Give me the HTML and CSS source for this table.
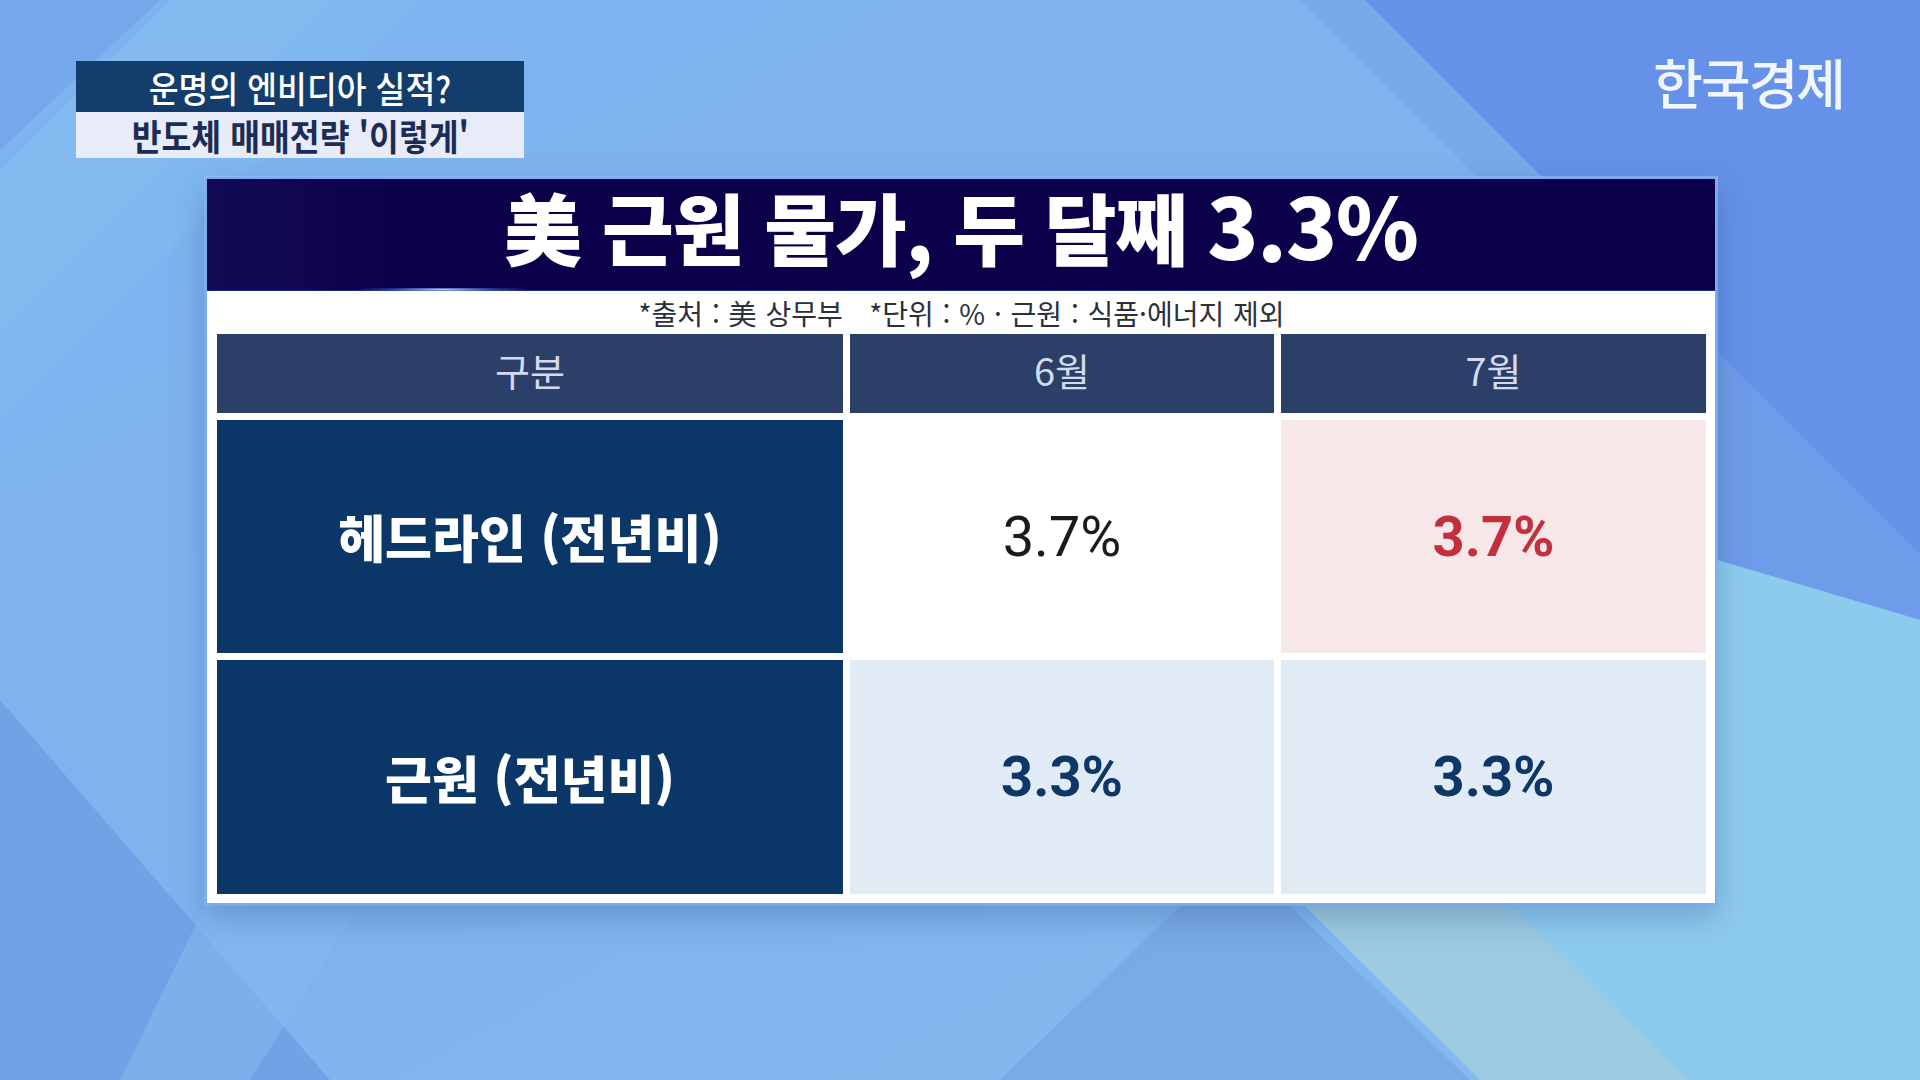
FILE: index.html
```html
<!DOCTYPE html>
<html lang="ko">
<head>
<meta charset="utf-8">
<title>美 근원 물가, 두 달째 3.3%</title>
<link rel="stylesheet" href="styles.css">
</head>
<body>
<div class="stage">
  <svg class="bg" width="1920" height="1080" viewBox="0 0 1920 1080" aria-hidden="true">
    <defs>
      <linearGradient id="g0" x1="0" y1="0" x2="1" y2="1">
        <stop offset="0" stop-color="#7db3ee"/>
        <stop offset="0.5" stop-color="#7fb3ee"/>
        <stop offset="1" stop-color="#86bcee"/>
      </linearGradient>
    </defs>
    <rect x="0" y="0" width="1920" height="1080" fill="url(#g0)"/>
    <polygon points="0,0 160,0 0,150" fill="#74a8ea"/>
    <polygon points="0,170 170,0 330,0 0,330" fill="#86c0f2" opacity="0.55"/>
    <polygon points="0,330 330,0 420,0 0,420" fill="#84c2f4" opacity="0.35"/>
    <polygon points="640,0 1365,0 1720,355 1720,420 1300,0" fill="#72a3ea" opacity="0.6"/>
    <polygon points="1365,0 1920,0 1920,555" fill="#6591e8"/>
    <polygon points="1717,352 1920,555 1920,620 1717,560" fill="#6f9ce9"/>
    <polygon points="1717,560 1920,620 1920,1080 1690,1080 1510,906 1717,906" fill="#8dcbee"/>
    <polygon points="0,700 0,1080 330,1080" fill="#6e9fe4" opacity="0.85"/>
    <polygon points="205,906 360,906 250,1080 120,1080" fill="#86b8ee" opacity="0.6"/>
    <polygon points="1180,906 1000,1080 1470,1080 1290,906" fill="#73a1df" opacity="0.6"/>
    <polygon points="1305,906 1510,906 1690,1080 1480,1080" fill="#9bcbe1"/>
  </svg>

  <header class="top">
    <div class="caption">
      <div class="cap-line cap-dark"><span class="squeeze">운명의 엔비디아 실적?</span></div>
      <div class="cap-line cap-light"><span class="squeeze">반도체 매매전략 '이렇게'</span></div>
    </div>
    <div class="logo">한국경제</div>
  </header>

  <main class="card">
    <div class="title-bar">
      <h1 class="title">美 근원 물가, 두 달째 <span class="title-num">3.3%</span></h1>
    </div>
    <div class="card-body">
      <p class="source">*출처 : 美 상무부&nbsp;&nbsp; *단위 : % · 근원 : 식품·에너지 제외</p>
      <div class="table">
        <div class="cell head">구분</div>
        <div class="cell head">6월</div>
        <div class="cell head">7월</div>

        <div class="cell label">헤드라인 (전년비)</div>
        <div class="cell value plain">3.7%</div>
        <div class="cell value red">3.7%</div>

        <div class="cell label">근원 (전년비)</div>
        <div class="cell value navy">3.3%</div>
        <div class="cell value navy">3.3%</div>
      </div>
    </div>
  </main>
</div>
</body>
</html>
```
FILE: styles.css
```css
html, body {
  margin: 0;
  padding: 0;
}
body {
  width: 1920px;
  height: 1080px;
  overflow: hidden;
  font-family: "Noto Sans CJK KR", "Noto Sans", sans-serif;
}
.stage {
  position: relative;
  width: 1920px;
  height: 1080px;
  overflow: hidden;
}
.bg {
  position: absolute;
  left: 0;
  top: 0;
  z-index: 0;
}
.top {
  position: relative;
  z-index: 1;
  display: flex;
  justify-content: space-between;
  align-items: flex-start;
  padding: 61px 76px 0 76px;
}
.caption {
  width: 448px;
  display: flex;
  flex-direction: column;
}
.cap-line {
  display: flex;
  justify-content: center;
  align-items: center;
  font-size: 36px;
  line-height: 1;
  white-space: nowrap;
}
.cap-dark {
  height: 51px;
  background: #123d6c;
  color: #ffffff;
  font-weight: 500;
}
.cap-light {
  height: 46px;
  background: #e8ebf8;
  color: #1b2c56;
  font-weight: 700;
}
.squeeze {
  display: inline-block;
  transform: scaleX(0.9);
}
.logo {
  margin-top: -14px;
  margin-right: 0;
  font-size: 54px;
  font-weight: 500;
  letter-spacing: -2px;
  color: #f1f6fd;
  line-height: 1.3;
}
.card {
  position: relative;
  z-index: 1;
  margin: 19px 0 0 205px;
  width: 1508px;
  border: 2px solid #7aabf4;
  background: #ffffff;
  box-shadow: 0 12px 30px rgba(30, 60, 120, 0.28), 0 0 0 1px rgba(160, 200, 255, 0.6);
}
.title-bar {
  height: 112px;
  background: linear-gradient(90deg, #120a55 0, #100651 6%, #0c004a 13%, #0c004a 100%);
  display: flex;
  justify-content: center;
  align-items: center;
  position: relative;
  border-bottom: 1px solid #1b2a7a;
  box-sizing: border-box;
}
.title-bar::after {
  content: "";
  position: absolute;
  left: 0;
  right: 0;
  bottom: -1px;
  height: 3px;
  background: radial-gradient(ellipse 90px 3px at 236px 50%, rgba(180, 220, 255, 0.95), rgba(80, 130, 230, 0.4) 60%, rgba(20, 30, 110, 0) 100%);
}
.title {
  margin: -22px 0 0 0;
  font-size: 78px;
  font-weight: 900;
  color: #ffffff;
  letter-spacing: -1px;
  white-space: nowrap;
  line-height: 1;
}
.title-num {
  font-size: 84px;
}
.card-body {
  padding: 0 9px 9px 10px;
}
.source {
  margin: 0;
  height: 43px;
  display: flex;
  justify-content: center;
  align-items: center;
  font-size: 28px;
  word-spacing: 1px;
  color: #2b303b;
  white-space: nowrap;
  line-height: 1;
}
.table {
  display: grid;
  grid-template-columns: 626px 424px 425px;
  grid-template-rows: 79px 233px 234px;
  column-gap: 7px;
  row-gap: 7px;
}
.cell {
  display: flex;
  justify-content: center;
  align-items: center;
  white-space: nowrap;
  line-height: 1;
}
.head {
  background: #2c3f69;
  color: #d3daef;
  font-size: 38px;
  font-weight: 400;
  padding-bottom: 8px;
  box-sizing: border-box;
}
.label {
  background: #0a3767;
  color: #ffffff;
  font-size: 51px;
  font-weight: 900;
}
.value {
  font-family: Roboto, "Liberation Sans", sans-serif;
  font-size: 56px;
}
.plain {
  background: #ffffff;
  color: #1b1b1b;
  font-weight: 400;
}
.red {
  background: #f8e7e8;
  color: #c1303c;
  font-weight: 700;
}
.navy {
  background: #e1ebf5;
  color: #0c3766;
  font-weight: 700;
}
```
